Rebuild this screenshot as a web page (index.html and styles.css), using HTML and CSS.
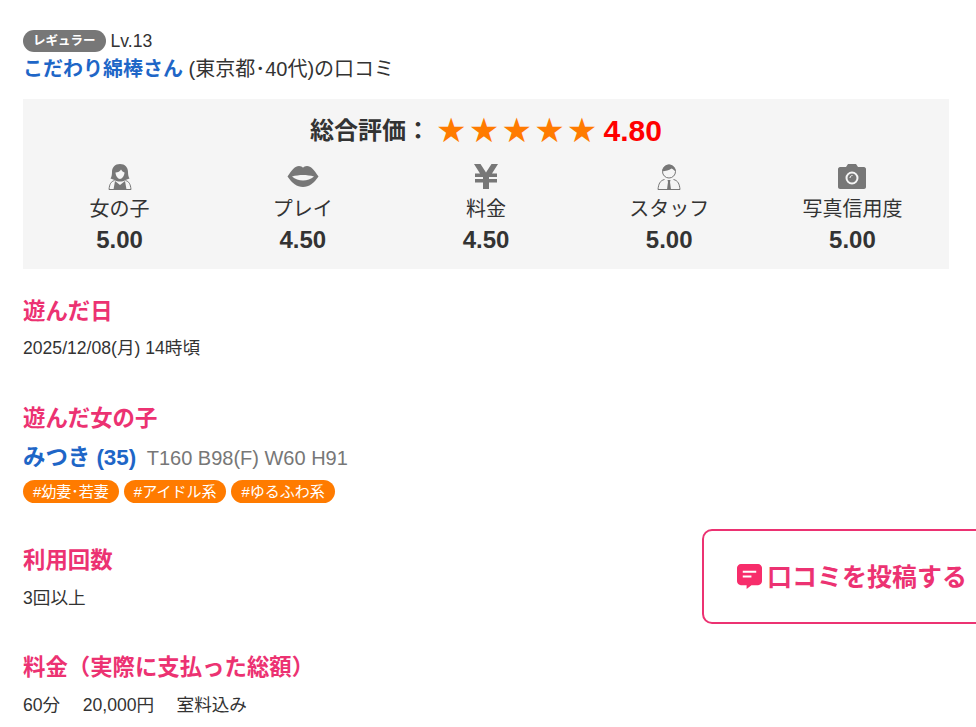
FILE: index.html
```html
<!DOCTYPE html>
<html lang="ja">
<head>
  <meta charset="UTF-8">
  <meta name="viewport" content="width=device-width, initial-scale=1.0">
  <title>口コミ</title>
  <link rel="stylesheet" href="styles.css">
</head>
<body>
  <div class="container">
    <div class="reviewer">
      <div class="rank"><span class="rank-badge">レギュラー</span><span>Lv.13</span></div>
      <div class="reviewer-name"><a href="#">こだわり綿棒さん</a> (東京都･40代)の口コミ</div>
    </div>

    <div class="rating">
      <div class="rating-total">
        <span class="rating-label">総合評価：</span>
        <span class="stars">★★★★★</span>
        <span class="rating-score">4.80</span>
      </div>
      <div class="rating-items">
        <div class="rating-item">
          <svg class="icon" width="24" height="26" viewBox="0 0 24 26">
            <path fill="#777" d="M12 0C7 0 4 3.500 4 8c0 3-.5 5-1.500 6.500l4 1.500c1.500 1 3.500 1.500 5.500 1.500s4-.5 5.500-1.500l4-1.500C20.500 13 20 11 20 8c0-4.500-3-8-8-8z"/>
            <path fill="#f5f5f5" d="M7.500 8.500c2.500 0 4.500-1 5.500-3 1 1.500 2 2.500 3.500 3 0 3-2.500 6.500-4.500 6.500s-4.500-3.500-4.500-6.500z"/>
            <path fill="#777" d="M7 17l5 4 5-4 1.500 8.500h-13z"/>
            <path fill="none" stroke="#777" d="M6.500 16.500C3 17.500 1.500 20 1 25.500h22c-.5-5.500-2-8-5.500-9"/>
          </svg>
          <div class="item-name">女の子</div>
          <div class="item-score">5.00</div>
        </div>
        <div class="rating-item">
          <svg class="icon" width="32" height="26" viewBox="0 0 32 26">
            <path fill="#777" d="M0.500 12.500C5 6 8 2 12 2c2 0 3 .8 4 1.800C17 2.800 18 2 20 2c4 0 7 4 11.500 10.500C27 19 22 23 16 23S5 19 .5 12.500z"/>
            <path fill="#f5f5f5" d="M5 12.500c3.500-1 7.500-1.500 11-1.500s7.500 .5 11 1.500c-3 2.500-7 4-11 4s-8-1.500-11-4z"/>
          </svg>
          <div class="item-name">プレイ</div>
          <div class="item-score">4.50</div>
        </div>
        <div class="rating-item">
          <svg class="icon" width="26" height="26" viewBox="0 0 26 26">
            <path fill="#777" d="M1 0h6.500L13 8.500 18.500 0H25l-6 9.500h5V13h-8v2h8v3.500h-8V25h-6v-6.500H2V15h8v-2H2V9.500h5z"/>
          </svg>
          <div class="item-name">料金</div>
          <div class="item-score">4.50</div>
        </div>
        <div class="rating-item">
          <svg class="icon" width="24" height="26" viewBox="0 0 24 26">
            <circle cx="12" cy="7.500" r="6.500" fill="#f5f5f5" stroke="#777"/>
            <path fill="#777" d="M5.500 7.500c0-4 3-7 6.500-7s6.500 3 6.500 7c-1.500-1.500-2.500-2.500-4-3-2.500 2-6 2.500-9 3z"/>
            <path fill="none" stroke="#777" d="M7.500 15.500C3 16.500 1.500 20 1 25.500h22c-.5-5.500-2-9-6.500-10"/>
            <path fill="#777" d="M10.500 16h3l-.5 2 1 7.500h-4l1-7.500z"/>
          </svg>
          <div class="item-name">スタッフ</div>
          <div class="item-score">5.00</div>
        </div>
        <div class="rating-item">
          <svg class="icon" width="28" height="26" viewBox="0 0 28 26">
            <path fill="#777" d="M2 3h6l2-3h8l2 3h6c1 0 2 1 2 2v18c0 1-1 2-2 2H2c-1 0-2-1-2-2V5c0-1 1-2 2-2z"/>
            <circle cx="14" cy="14" r="5.500" fill="none" stroke="#f5f5f5" stroke-width="2"/>
            <path fill="none" stroke="#f5f5f5" d="M12 14c0-1.500 1-2.500 2.500-2.500"/>
          </svg>
          <div class="item-name">写真信用度</div>
          <div class="item-score">5.00</div>
        </div>
      </div>
    </div>

    <section class="block block-date">
      <h2>遊んだ日</h2>
      <p>2025/12/08(月) 14時頃</p>
    </section>

    <section class="block">
      <h2>遊んだ女の子</h2>
      <div class="girl">
        <a href="#">みつき (35)</a>
        <span class="girl-size">T160 B98(F) W60 H91</span>
      </div>
      <div class="tags">
        <span class="tag">#幼妻･若妻</span>
        <span class="tag">#アイドル系</span>
        <span class="tag">#ゆるふわ系</span>
      </div>
    </section>

    <section class="block">
      <h2>利用回数</h2>
      <p>3回以上</p>
    </section>

    <section class="block">
      <h2>料金（実際に支払った総額）</h2>
      <p class="price"><span>60分</span><span>20,000円</span><span>室料込み</span></p>
    </section>
  </div>

  <a class="post-button" href="#">
    <svg width="25" height="25" viewBox="0 0 26 26">
      <path fill="#f72d6b" d="M4 0h18c2 0 4 2 4 4v14c0 2-2 4-4 4h-7l-5 4v-4H4c-2 0-4-2-4-4V4c0-2 2-4 4-4z"/>
      <path fill="#fff" d="M6 7h14v2H6zM6 12h9v2H6z"/>
    </svg>
    <span class="post-label">口コミを投稿する</span>
  </a>
</body>
</html>
```

FILE: styles.css
```css
body {
  font-family: "Liberation Sans", Arial, "Noto Sans CJK JP", sans-serif;
  color: #333;
  margin: 0;
  background-color: #fff;
}
a {
  text-decoration: none;
}
.container {
  padding: 30px 27px 0 23px;
}
.rank {
  display: flex;
  align-items: center;
  gap: 5px;
  height: 22px;
  font-size: 17.6px;
}
.rank-badge {
  background-color: #777;
  color: #fff;
  font-size: 12.5px;
  font-weight: bold;
  line-height: 22px;
  padding: 0 10px;
  border-radius: 11px;
}
.reviewer-name {
  font-size: 20px;
  line-height: 28px;
  height: 28px;
  margin-top: 3px;
}
.reviewer-name a {
  color: #1e66c7;
  font-weight: bold;
}
.rating {
  background-color: #f5f5f5;
  margin-top: 16px;
  height: 170px;
  padding-top: 12px;
  box-sizing: border-box;
}
.rating-total {
  display: flex;
  justify-content: center;
  align-items: center;
  height: 36px;
  gap: 6px;
}
.rating-label {
  font-size: 24px;
  font-weight: bold;
  margin-bottom: 2px;
}
.stars {
  color: #ff7b00;
  font-size: 34px;
  letter-spacing: 2.2px;
  margin: 2px -2px 0 0;
  font-family: "DejaVu Sans", sans-serif;
}
.rating-score {
  color: #f00;
  font-size: 30px;
  font-weight: bold;
  margin-top: 3px;
}
.rating-items {
  display: grid;
  grid-template-columns: repeat(5, 1fr);
  margin-top: 5px;
  padding: 0 5px;
}
.rating-item {
  text-align: center;
}
.icon {
  display: block;
  margin: 12px auto 4px;
}
.item-name {
  font-size: 20px;
  line-height: 30px;
}
.item-score {
  font-size: 24px;
  font-weight: bold;
  line-height: 32px;
}
.block {
  margin-top: 43px;
}
.block h2 {
  color: #ec3272;
  font-size: 22.4px;
  line-height: 30px;
  height: 30px;
  margin: 0;
}
.block p {
  font-size: 17.6px;
  line-height: 24px;
  height: 24px;
  margin: 10px 0 0;
}
.block-date {
  margin-top: 28px;
}
.block-date + .block {
  margin-top: 44px;
}
.block-date p {
  margin-top: 9px;
}
.girl {
  margin-top: 8px;
  line-height: 32px;
  height: 32px;
}
.girl a {
  color: #1e66c7;
  font-size: 22.4px;
  font-weight: bold;
}
.girl-size {
  color: #777;
  font-size: 20px;
  margin-left: 6px;
}
.tags {
  display: flex;
  gap: 5px;
  margin-top: 6px;
}
.tag {
  background-color: #ff7b00;
  color: #fff;
  font-size: 15px;
  line-height: 23px;
  padding: 0 10px;
  border-radius: 12px;
}
.block .price {
  display: flex;
  gap: 22.5px;
}
.post-button {
  position: fixed;
  left: 702px;
  top: 529px;
  width: 300px;
  height: 95px;
  box-sizing: border-box;
  border: 2px solid #ec3272;
  border-radius: 10px;
  background-color: #fff;
  color: #ec3272;
  font-size: 25px;
  font-weight: bold;
  display: flex;
  align-items: center;
  padding-left: 33px;
  gap: 5px;
}
.post-label {
  margin-bottom: 4px;
}
```
